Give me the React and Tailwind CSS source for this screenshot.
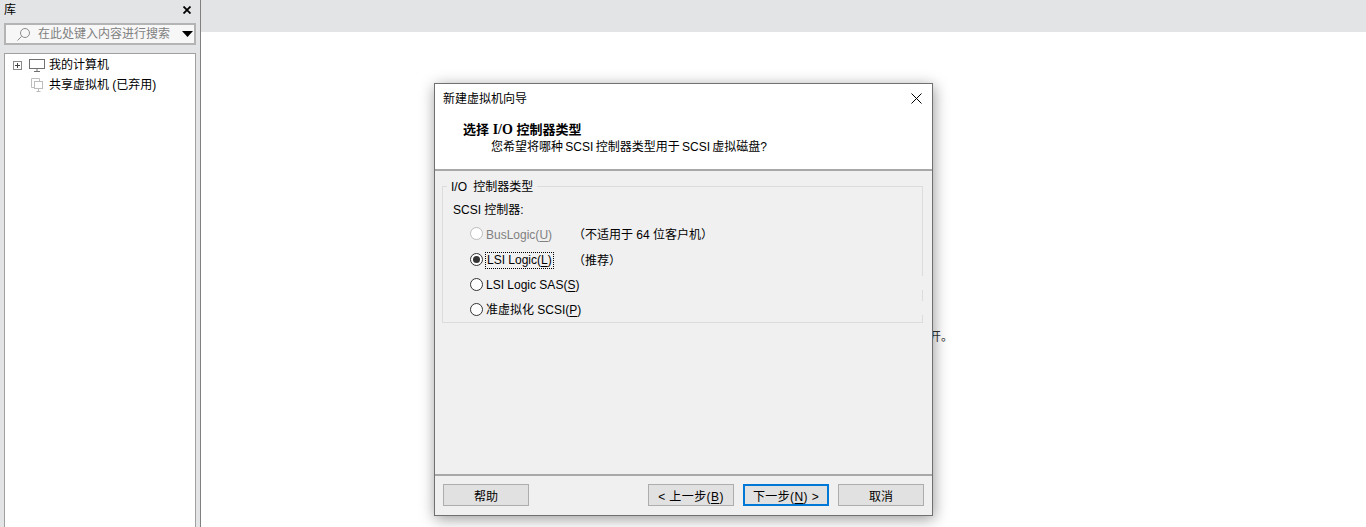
import React from 'react';

const uiFont = 'font-["Liberation_Sans","Noto_Sans_CJK_SC",sans-serif]';

// accelerator letter, as in (U)
const Key = ({ k }) => <span className="underline underline-offset-2">{k}</span>;

const Radio = ({ checked, disabled }) => (
  <span className={`w-[13px] h-[13px] shrink-0 rounded-full border bg-white flex items-center justify-center ${disabled ? 'border-[#bcbcbc]' : 'border-[#333]'}`}>
    {checked && <span className="w-[7px] h-[7px] rounded-full bg-[#333]" />}
  </span>
);

const WizardButton = ({ children, primary, wide }) => (
  <button className={`w-[86px] h-[22px] flex items-center justify-center pt-[3px] bg-[#e1e1e1] text-[12px] leading-none text-black whitespace-nowrap ${wide ? 'tracking-[0.4px]' : ''} ${primary ? 'border-2 border-[#0078d7]' : 'border border-[#adadad]'}`}>
    {children}
  </button>
);

const Sidebar = () => (
  <aside className="w-[201px] shrink-0 h-full bg-[#e3e4e6] border-r border-[#808080] flex flex-col">
    <div className="h-[23px] shrink-0 flex items-start justify-between pl-[4px] pr-[9px] pt-[2px]">
      <span className="text-[12px] leading-[16px] text-black">库</span>
      <svg width="8" height="8" viewBox="0 0 8 8" stroke="#000" strokeWidth="1.8" className="mt-[4px]">
        <path d="M.5.5l7 7M7.5.5l-7 7" />
      </svg>
    </div>
    <div className="mx-[4px] h-[22px] shrink-0 bg-[#f7f7f7] border-2 border-[#b4b4b4] flex items-center pl-[10px] pr-[1px]">
      <svg width="15" height="15" viewBox="0 0 15 15" fill="none" stroke="#8c8c8c" strokeWidth="1" className="shrink-0">
        <circle cx="9" cy="6" r="4.5" />
        <path d="M5.6 9.4 1.5 13.5" />
      </svg>
      <span className="ml-[7px] text-[12px] leading-none text-[#808080] whitespace-nowrap">在此处键入内容进行搜索</span>
      <svg width="11" height="6" viewBox="0 0 11 6" className="ml-auto shrink-0">
        <path d="M0 0h11L5.5 6z" fill="#000" />
      </svg>
    </div>
    <div className="mx-[4px] mt-[8px] flex-1 bg-white border border-b-0 border-[#a0a0a0] pt-[3px]">
      <div className="h-[16px] flex items-center">
        <svg width="9" height="9" viewBox="0 0 9 9" className="ml-[8px] shrink-0">
          <rect x="0.5" y="0.5" width="8" height="8" fill="#fff" stroke="#8a8a8a" />
          <path d="M2 4.5h5M4.5 2v5" stroke="#444" />
        </svg>
        <svg width="16" height="13" viewBox="0 0 16 13" fill="none" stroke="#707070" className="ml-[7px] shrink-0">
          <rect x="0.5" y="0.5" width="15" height="9" />
          <path d="M5 12.5h6M8 10v2" />
        </svg>
        <span className="ml-[4px] text-[12px] leading-none text-black">我的计算机</span>
      </div>
      <div className="h-[16px] mt-[4px] flex items-center">
        <svg width="13" height="14" viewBox="0 0 13 14" fill="none" stroke="#bdbdbd" className="ml-[26px] shrink-0">
          <path d="M3 9.5H.5v-9h8V3" />
          <rect x="3.5" y="3.5" width="8" height="7" />
          <path d="M5.5 13.5h4M7.5 11v2" />
        </svg>
        <span className="ml-[5px] text-[12px] leading-none text-black whitespace-nowrap">共享虚拟机 (已弃用)</span>
      </div>
    </div>
  </aside>
);

const Wizard = () => (
  <div className="absolute left-[434px] top-[83px] w-[499px] h-[433px] bg-[#f0f0f0] border border-[#707070] shadow-[1px_3px_14px_rgba(0,0,0,0.4)] flex flex-col">
    <div className="h-[87px] shrink-0 bg-white border-b-2 border-[#a8a8a8]">
      <div className="flex items-start justify-between pl-[8px] pr-[10px] pt-[7px]">
        <span className="text-[12px] leading-[16px] text-black">新建虚拟机向导</span>
        <svg width="11" height="11" viewBox="0 0 11 11" stroke="#000" className="mt-[2px]">
          <path d="M.5.5l10 10M10.5.5l-10 10" />
        </svg>
      </div>
      <div className="ml-[28px] mt-[15px] text-[13px] leading-[16px] font-bold text-black whitespace-nowrap">
        选择 <span className='font-["Liberation_Serif",serif] text-[14px]'>I/O</span> 控制器类型
      </div>
      <div className="ml-[56px] mt-[1px] text-[12px] leading-[16px] text-black whitespace-nowrap [word-spacing:-1px]">
        您希望将哪种 SCSI 控制器类型用于 SCSI 虚拟磁盘?
      </div>
    </div>

    <div className="flex-1 pl-[7px] pr-[9px] pt-[15px]">
      <div className="relative h-[137px] border border-[#dcdcdc]">
        <span className="absolute left-[4px] -top-[8px] px-[4px] bg-[#f0f0f0] text-[12px] leading-[16px] text-black whitespace-nowrap [word-spacing:3px]">I/O 控制器类型</span>
        <div className="pl-[10px] pt-[15px] text-[12px] leading-[16px] text-black">SCSI 控制器:</div>
        <div className="mt-[9px] pl-[27px] text-[12px] text-black">
          <div className="h-[14px] flex items-start">
            <Radio disabled />
            <span className="ml-[3px] leading-[16px] text-[#808080] whitespace-nowrap">BusLogic(<Key k="U" />)</span>
            <span className="absolute left-[130px] leading-[16px] whitespace-nowrap">（不适用于 64 位客户机）</span>
          </div>
          <div className="h-[14px] mt-[11px] flex items-start">
            <span className="mt-[1px]"><Radio checked /></span>
            <span className="ml-[2px] border border-dotted border-black h-[17px] leading-[15px] px-px whitespace-nowrap">LSI Logic(<Key k="L" />)</span>
            <span className="absolute left-[130px] mt-px leading-[16px] whitespace-nowrap">（推荐）</span>
          </div>
          <div className="h-[14px] mt-[10px] -mr-px flex items-start bg-[#f0f0f0]">
            <span className="mt-[2px]"><Radio /></span>
            <span className="ml-[3px] mt-[1px] leading-[16px] whitespace-nowrap">LSI Logic SAS(<Key k="S" />)</span>
          </div>
          <div className="h-[14px] mt-[11px] -mr-px flex items-start bg-[#f0f0f0]">
            <span className="mt-[2px]"><Radio /></span>
            <span className="ml-[3px] mt-[1px] leading-[16px] whitespace-nowrap">准虚拟化 SCSI(<Key k="P" />)</span>
          </div>
        </div>
      </div>
    </div>

    <div className="h-[41px] shrink-0 border-t-2 border-[#a8a8a8] flex items-start pl-[8px] pr-[8px] pt-[8px]">
      <WizardButton>帮助</WizardButton>
      <div className="ml-auto flex gap-[9px]">
        <WizardButton wide>&lt; 上一步(<Key k="B" />)</WizardButton>
        <WizardButton primary wide>下一步(<Key k="N" />) &gt;</WizardButton>
        <WizardButton>取消</WizardButton>
      </div>
    </div>
  </div>
);

export default function App() {
  return (
    <div className={`relative w-screen h-screen overflow-hidden flex bg-white ${uiFont}`}>
      <Sidebar />
      <main className="flex-1 h-full flex flex-col">
        <div className="h-[32px] shrink-0 bg-[#e3e4e6]" />
        <p className="ml-[716px] mt-[297px] text-[12px] leading-[16px] text-[#333] whitespace-nowrap">打开。</p>
      </main>
      <Wizard />
    </div>
  );
}
